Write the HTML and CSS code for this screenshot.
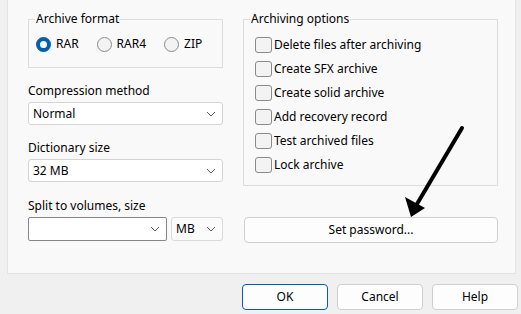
FILE: index.html
```html
<!DOCTYPE html>
<html lang="en">
<head>
    <meta charset="UTF-8">
    <title>Archive name and parameters</title>
    <link rel="stylesheet" href="styles.css">
</head>
<body>
    <div class="panel">
        <div class="left-col">
            <fieldset class="group format-group">
                <legend>Archive format</legend>
                <div class="radio-row">
                    <label class="radio"><span class="radio-dot checked"></span>RAR</label>
                    <label class="radio"><span class="radio-dot"></span>RAR4</label>
                    <label class="radio"><span class="radio-dot"></span>ZIP</label>
                </div>
            </fieldset>

            <div class="field-label first">Compression method</div>
            <div class="combo">
                <span>Normal</span>
                <svg class="chevron" width="10" height="6" viewBox="0 0 10 6"><path d="M1 1 L5 5 L9 1" fill="none" stroke="#5f5f5f" stroke-width="1"/></svg>
            </div>

            <div class="field-label">Dictionary size</div>
            <div class="combo">
                <span>32 MB</span>
                <svg class="chevron" width="10" height="6" viewBox="0 0 10 6"><path d="M1 1 L5 5 L9 1" fill="none" stroke="#5f5f5f" stroke-width="1"/></svg>
            </div>

            <div class="field-label split">Split to volumes, size</div>
            <div class="split-row">
                <div class="combo edit">
                    <span></span>
                    <svg class="chevron" width="10" height="6" viewBox="0 0 10 6"><path d="M1 1 L5 5 L9 1" fill="none" stroke="#5f5f5f" stroke-width="1"/></svg>
                </div>
                <div class="combo unit">
                    <span>MB</span>
                    <svg class="chevron" width="10" height="6" viewBox="0 0 10 6"><path d="M1 1 L5 5 L9 1" fill="none" stroke="#5f5f5f" stroke-width="1"/></svg>
                </div>
            </div>
        </div>

        <div class="right-col">
            <fieldset class="group options-group">
                <legend>Archiving options</legend>
                <div class="check-list">
                    <label class="check"><span class="box"></span>Delete files after archiving</label>
                    <label class="check"><span class="box"></span>Create SFX archive</label>
                    <label class="check"><span class="box"></span>Create solid archive</label>
                    <label class="check"><span class="box"></span>Add recovery record</label>
                    <label class="check"><span class="box"></span>Test archived files</label>
                    <label class="check"><span class="box"></span>Lock archive</label>
                </div>
            </fieldset>
            <button class="btn password-btn">Set password...</button>
        </div>
    </div>

    <div class="dialog-buttons">
        <button class="btn default">OK</button>
        <button class="btn">Cancel</button>
        <button class="btn">Help</button>
    </div>

    <!-- annotation arrow -->
    <svg class="arrow" width="521" height="314" viewBox="0 0 521 314">
        <line x1="462" y1="128" x2="417" y2="204" stroke="#000" stroke-width="4" stroke-linecap="round"/>
        <polygon points="411,217 405,197 425,208" fill="#000"/>
    </svg>
</body>
</html>
```

FILE: styles.css
```css
* {
    margin: 0;
    padding: 0;
    box-sizing: border-box;
}

body {
    font-family: "Segoe UI", "Noto Sans", sans-serif;
    font-size: 12px;
    line-height: 16px;
    color: #000;
    background: #f0f0f0;
    width: 521px;
    height: 314px;
    overflow: hidden;
    position: relative;
}

.panel {
    display: flex;
    gap: 20px;
    height: 274px;
    margin: 0 5px 0 7px;
    padding-left: 20px;
    background: #f9f9f9;
    border: 1px solid #e3e3e3;
    border-top: none;
}

.left-col {
    width: 195px;
}

.right-col {
    width: 255px;
}

.group {
    border: 1px solid #dcdcdc;
    margin-top: 11px;
    padding: 0;
}

.group legend {
    margin-left: 6px;
    padding: 0 1px;
    font-size: 12px;
    line-height: 16px;
}

.format-group {
    height: 57px;
    padding-top: 9px;
}

.radio-row {
    display: flex;
    margin-left: 7px;
}

.radio {
    display: flex;
    align-items: center;
    height: 16px;
    margin-right: 18px;
}

.radio-dot {
    width: 15px;
    height: 15px;
    border-radius: 50%;
    border: 1px solid #8a8a8a;
    background: #f3f3f3;
    margin-right: 5px;
}

.radio-dot.checked {
    border: 4px solid #005fb8;
    background: #fff;
}

.field-label {
    margin-top: 15px;
}

.field-label.split {
    margin-top: 16px;
}

.combo {
    display: flex;
    align-items: center;
    justify-content: space-between;
    height: 23px;
    margin-top: 3px;
    padding: 0 6px 0 4px;
    background: #fff;
    border: 1px solid #d3d3d3;
    border-radius: 3px;
}

.chevron {
    display: block;
}

.split-row {
    display: flex;
    gap: 4px;
    margin-top: 3px;
}

.split-row .combo {
    margin-top: 0;
    height: 24px;
}

.combo.edit {
    width: 139px;
    border-color: #868686;
    border-radius: 2px;
}

.combo.unit {
    width: 52px;
    background: #fbfbfb;
    border-color: #dadada;
}

.options-group {
    height: 175px;
    padding-top: 6px;
}

.check-list {
    margin-left: 11px;
}

.check {
    display: flex;
    align-items: center;
    height: 24px;
}

.box {
    width: 17px;
    height: 16px;
    margin-right: 2px;
    border: 1px solid #8a8a8a;
    border-radius: 3px;
    background: #f3f3f3;
}

.btn {
    font-family: inherit;
    font-size: 12px;
    line-height: 16px;
    color: #000;
    background: #fdfdfd;
    border: 1px solid #d0d0d0;
    border-radius: 4px;
    height: 26px;
}

.password-btn {
    display: block;
    width: 254px;
    margin: 31px 0 0 1px;
}

.dialog-buttons {
    display: flex;
    justify-content: flex-end;
    gap: 9px;
    margin-top: 10px;
    padding-right: 3px;
}

.dialog-buttons .btn {
    width: 86px;
}

.btn.default {
    border-color: #005fb8;
}

.arrow {
    position: absolute;
    left: 0;
    top: 0;
    pointer-events: none;
}
```
